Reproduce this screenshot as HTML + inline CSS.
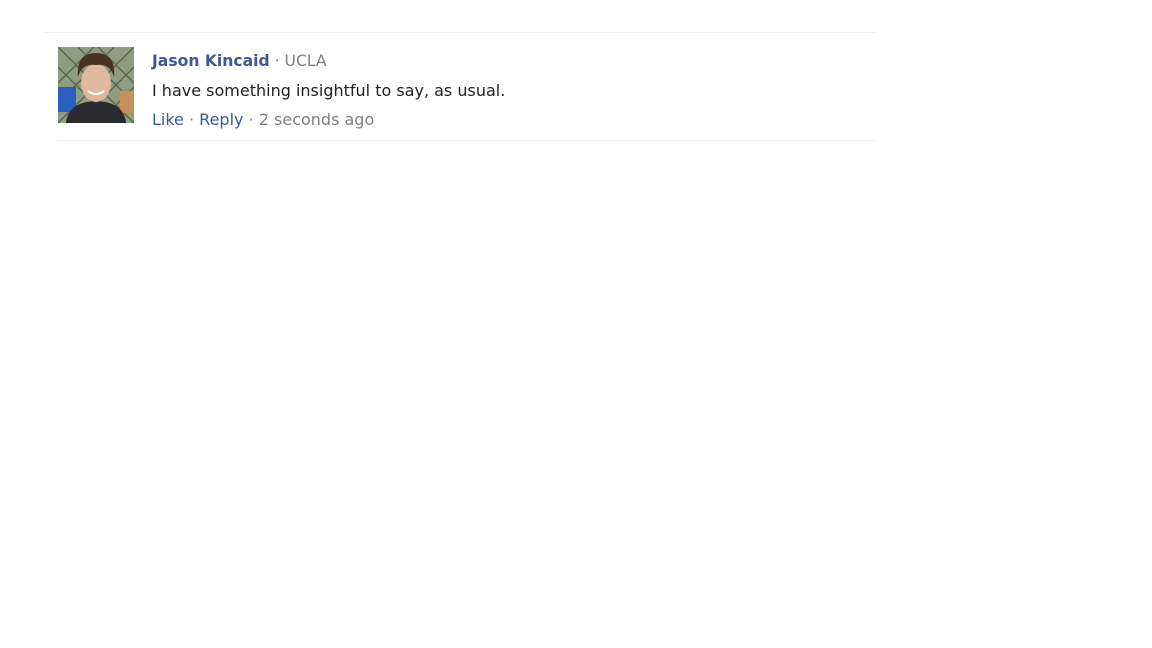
<!DOCTYPE html>
<html><head><style>
body{margin:0;width:1152px;height:648px;background:#fff;position:relative;overflow:hidden;font-family:"DejaVu Sans","Liberation Sans",sans-serif;}
.l1{position:absolute;left:44px;top:32px;width:832px;height:1px;background:#eef0f4}
.l2{position:absolute;left:57px;top:140px;width:819px;height:1px;background:#eceef2}
.av{position:absolute;left:58px;top:47px;width:76px;height:76px;overflow:hidden;background:#9aa88a}
.t{position:absolute;left:152px;font-size:16px;white-space:nowrap}
.b{color:#3b5998}.g{color:#808080}
</style></head><body>
<div class="l1"></div><div class="l2"></div>
<div class="av"><svg width="76" height="76">
<rect width="76" height="76" fill="#8f9c80"/>
<path d="M0 0L76 76M20 0L76 56M40 0L76 36M0 20L56 76M0 40L36 76M76 0L0 76M56 0L0 56M36 0L0 36M76 20L20 76M76 40L40 76" stroke="#5a6650" stroke-width="1.5"/>
<rect x="0" y="40" width="18" height="25" fill="#2a5fc0"/>
<rect x="62" y="44" width="14" height="22" fill="#c8905a"/>
<path d="M8 76 Q10 55 38 54 Q66 55 68 76Z" fill="#2a2a30"/>
<ellipse cx="38" cy="36" rx="15" ry="19" fill="#e0b8a0"/>
<path d="M20 30 Q18 6 38 6 Q58 6 56 30 Q52 16 38 18 Q24 16 20 30Z" fill="#4a3020"/>
<path d="M30 44 Q38 50 46 44" stroke="#fff" stroke-width="2" fill="none"/>
</svg></div>
<div class="t" style="top:52px;font-size:15.6px"><span class="b" style="font-weight:bold">Jason Kincaid</span><span class="g"> · UCLA</span></div>
<div class="t" style="top:81px;color:#222">I have something insightful to say, as usual.</div>
<div class="t" style="top:110px"><span class="b">Like</span><span class="g"> · </span><span class="b">Reply</span><span class="g"> · 2 seconds ago</span></div>
</body></html>
